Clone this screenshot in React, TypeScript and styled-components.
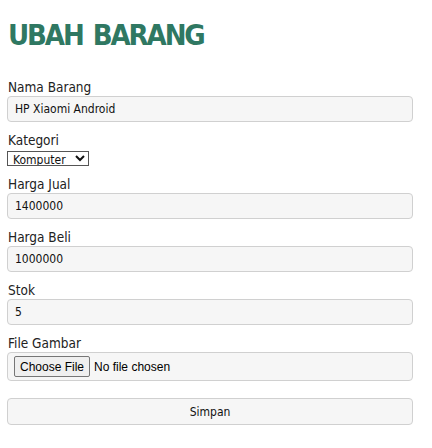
import React from "react";
import styled, { createGlobalStyle } from "styled-components";

const Global = createGlobalStyle`
  html, body { margin: 0; padding: 0; background: #fff; }
  body { font-family: "DejaVu Sans Condensed", "DejaVu Sans", sans-serif; color: #222; }
`;

const Page = styled.div`
  padding: 15px 19px 20px 7px;
  display: flex;
  flex-direction: column;
`;

const Title = styled.h1`
  margin: 0 0 24px 1px;
  font-family: "DejaVu Sans Condensed", "DejaVu Sans", sans-serif;
  font-weight: bold;
  font-size: 29px;
  line-height: 40px;
  color: #2f7862;
  letter-spacing: -2.1px;
  word-spacing: 3px;
`;

const Form = styled.form`
  display: flex;
  flex-direction: column;
`;

const Label = styled.label`
  display: block;
  margin-left: 1px;
  font-family: "DejaVu Sans Condensed", "DejaVu Sans", sans-serif;
  font-size: 13.5px;
  line-height: 17px;
  color: #222;
`;

const TextInput = styled.input`
  box-sizing: border-box;
  width: 100%;
  height: 26px;
  margin: 0 0 10px;
  padding: 0 7px;
  border: 1px solid #d0d0d0;
  border-radius: 4px;
  background: #f6f6f6;
  font-family: "DejaVu Sans Condensed", "DejaVu Sans", sans-serif;
  font-size: 12px;
  color: #111;
  outline: none;
`;

const Select = styled.select`
  box-sizing: border-box;
  align-self: flex-start;
  width: 82px;
  height: 15px;
  margin: 2px 0 10px;
  padding: 0 1px;
  border: 1px solid #555;
  border-radius: 0;
  background: #fff;
  font-family: "DejaVu Sans Condensed", "DejaVu Sans", sans-serif;
  font-size: 12px;
  line-height: 13px;
  color: #111;
`;

const FileBox = styled.div`
  box-sizing: border-box;
  height: 29px;
  display: flex;
  align-items: center;
  gap: 4px;
  padding: 0 6px;
  border: 1px solid #d0d0d0;
  border-radius: 4px;
  background: #f6f6f6;
  margin-bottom: 17px;
`;

const FileButton = styled.span`
  box-sizing: border-box;
  height: 21px;
  padding: 0 5px;
  display: flex;
  align-items: center;
  border: 1px solid #767676;
  border-radius: 2px;
  background: #efefef;
  font-family: "Liberation Sans", Arial, sans-serif;
  font-size: 12px;
  color: #000;
`;

const FileText = styled.span`
  font-family: "Liberation Sans", Arial, sans-serif;
  font-size: 12px;
  color: #000;
`;

const Button = styled.button`
  box-sizing: border-box;
  width: 100%;
  height: 27px;
  border: 1px solid #d0d0d0;
  border-radius: 4px;
  background: #f6f6f6;
  font-family: "DejaVu Sans Condensed", "DejaVu Sans", sans-serif;
  font-size: 12px;
  color: #111;
`;

export default function App() {
  return (
    <>
      <Global />
      <Page>
        <Title>UBAH BARANG</Title>
        <Form onSubmit={(e) => e.preventDefault()}>
          <Label>Nama Barang</Label>
          <TextInput defaultValue="HP Xiaomi Android" />
          <Label>Kategori</Label>
          <Select defaultValue="Komputer">
            <option>Komputer</option>
            <option>Handphone</option>
          </Select>
          <Label>Harga Jual</Label>
          <TextInput defaultValue="1400000" />
          <Label>Harga Beli</Label>
          <TextInput defaultValue="1000000" />
          <Label>Stok</Label>
          <TextInput defaultValue="5" />
          <Label>File Gambar</Label>
          <FileBox>
            <FileButton>Choose File</FileButton>
            <FileText>No file chosen</FileText>
          </FileBox>
          <Button type="submit">Simpan</Button>
        </Form>
      </Page>
    </>
  );
}
